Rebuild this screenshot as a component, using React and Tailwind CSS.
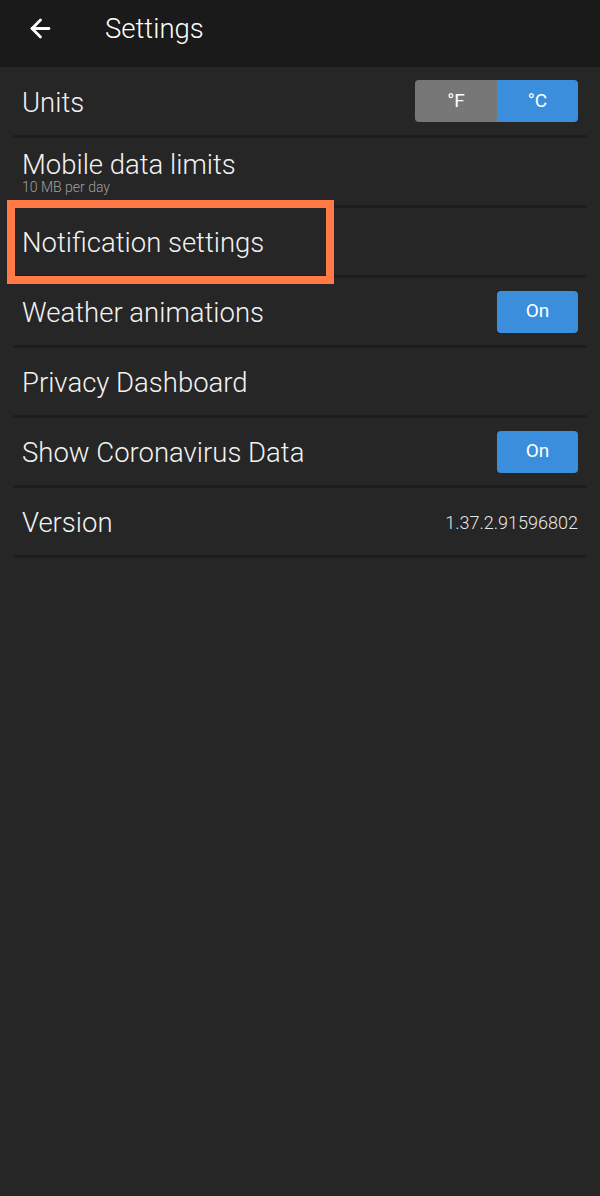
import { ArrowLeft } from 'lucide-react';

const rows = [
  { label: 'Units', kind: 'units' },
  { label: 'Mobile data limits', sub: '10 MB per day' },
  { label: 'Notification settings' },
  { label: 'Weather animations', kind: 'toggle' },
  { label: 'Privacy Dashboard' },
  { label: 'Show Coronavirus Data', kind: 'toggle' },
  { label: 'Version', value: '1.37.2.91596802' },
];

const Row = ({ row, first }) => (
  <div
    className={`flex items-center justify-between border-b-[3px] border-[#1d1d1d] pl-[9px] pr-[9px] ${first ? 'h-[71px]' : 'h-[70px]'}`}
  >
    <div className={`flex flex-col ${row.sub ? 'pt-[1px]' : 'pt-[3px]'}`}>
      <span className="text-[27.5px] font-light leading-[32px] text-[#f2f2f2]">{row.label}</span>
      {row.sub && <span className="-mt-[2px] text-[14px] font-light leading-[16px] text-[#a0a0a0]">{row.sub}</span>}
    </div>
    {row.kind === 'units' && (
      <div className="flex h-[42px] w-[163px] overflow-hidden rounded-[4px] text-[19px] text-white">
        <div className="flex w-[82px] items-center justify-center bg-[#777777]">°F</div>
        <div className="flex flex-1 items-center justify-center bg-[#3a8edb]">°C</div>
      </div>
    )}
    {row.kind === 'toggle' && (
      <div className="flex h-[42px] w-[81px] items-center justify-center rounded-[4px] bg-[#3a8edb] text-[19px] text-white">
        On
      </div>
    )}
    {row.value && <span className="pt-[2px] text-[18px] font-light text-[#e6e6e6]">{row.value}</span>}
  </div>
);

export default function App() {
  return (
    <div className="relative min-h-[1196px] w-[600px] bg-[#262626] font-['Roboto',sans-serif]">
      <div className="flex h-[67px] items-center bg-[#1a1a1a] pb-[10px]">
        <ArrowLeft className="ml-[26px] h-[29px] w-[29px] text-white" strokeWidth={2.3} />
        <span className="ml-[50px] text-[27.5px] font-light text-white">Settings</span>
      </div>
      <div className="mx-[13px]">
        {rows.map((row, i) => (
          <Row key={row.label} row={row} first={i === 0} />
        ))}
      </div>
      {/* highlight annotation */}
      <div className="absolute left-[7px] top-[200px] h-[84px] w-[327px] border-[8px] border-[#ff7a44]" />
    </div>
  );
}
